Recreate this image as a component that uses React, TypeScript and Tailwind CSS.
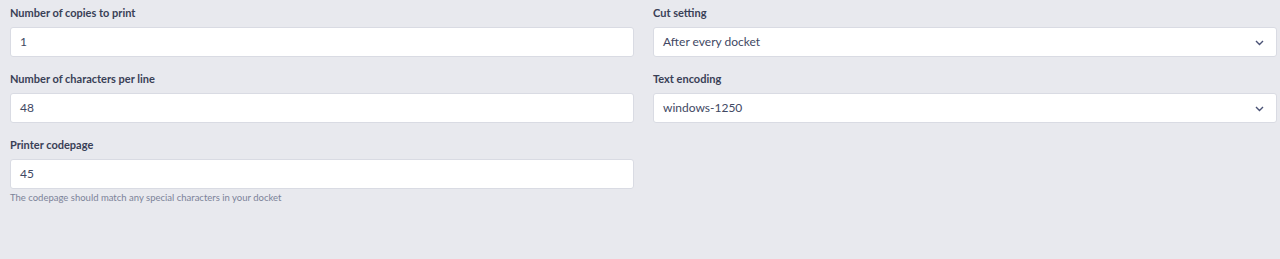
import React from "react";

const Chevron = () => (
  <svg width="9" height="6" viewBox="0 0 9 6" className="absolute right-[12px] top-[12px]">
    <path d="M1 1 L4.5 4.5 L8 1" fill="none" stroke="#4a5275" strokeWidth="1.4" />
  </svg>
);

function Field({ label, value, select, help }: { label: string; value: string; select?: boolean; help?: string }) {
  return (
    <div className="flex flex-col">
      <label className="text-[11px] leading-[16px] font-bold text-[#394056] mb-[6px]">{label}</label>
      <div className="relative h-[30px] bg-white border border-[#d9dbe3] rounded-[3px] flex items-center pl-[9px] text-[12px] text-[#414863]">
        {value}
        {select && <Chevron />}
      </div>
      {help && <div className="text-[9.5px] leading-[12px] text-[#7c8399] mt-[3px]">{help}</div>}
    </div>
  );
}

export default function App() {
  return (
    <div
      className="w-[1280px] h-[259px] bg-[#e8e9ee] pl-[10px] pr-[3px] pt-[5px]"
      style={{ fontFamily: 'Lato, sans-serif' }}
    >
      <div className="grid grid-cols-2 gap-x-[19px] gap-y-[14px] items-start">
        <Field label="Number of copies to print" value="1" />
        <Field label="Cut setting" value="After every docket" select />
        <Field label="Number of characters per line" value="48" />
        <Field label="Text encoding" value="windows-1250" select />
        <Field label="Printer codepage" value="45" help="The codepage should match any special characters in your docket" />
      </div>
    </div>
  );
}
